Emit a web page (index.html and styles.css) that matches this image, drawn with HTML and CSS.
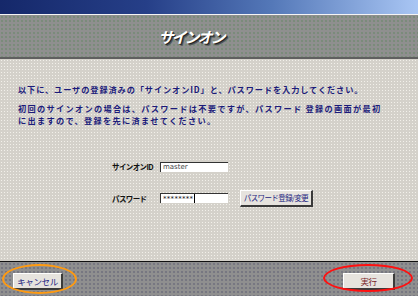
FILE: index.html
```html
<!DOCTYPE html>
<html lang="ja">
<head>
    <meta charset="UTF-8">
    <meta name="viewport" content="width=device-width, initial-scale=1.0">
    <title>サインオン</title>
    <link rel="stylesheet" href="styles.css">
</head>
<body>
<div class="page">
    <div class="topbar"></div>

    <header class="title-bar">
        <h1 class="title">サインオン</h1>
    </header>

    <div class="content">
        <p class="message tight">以下に、ユーザの登録済みの「サインオンID」と、パスワードを入力してください。</p>
        <p class="message">初回のサインオンの場合は、パスワードは不要ですが、パスワード 登録の画面が最初<br>に出ますので、登録を先に済ませてください。</p>

        <div class="signon-form">
            <label class="field-label">サインオンID</label>
            <div class="field-box">master</div>
            <div></div>

            <label class="field-label">パスワード</label>
            <div class="field-box password">********<span class="caret"></span></div>
            <button class="btn btn-small">パスワード登録/変更</button>
        </div>
    </div>

    <footer class="bottom-bar">
        <div class="btn-wrap cancel">
            <button class="btn btn-cancel">キャンセル</button>
        </div>
        <div class="btn-wrap execute">
            <button class="btn btn-execute">実行</button>
        </div>
    </footer>
</div>
</body>
</html>
```

FILE: styles.css
```css
body {
    margin: 0;
    padding: 0;
    font-family: "Noto Sans CJK JP", "Liberation Sans", sans-serif;
    background-color: #d4d1ca;
}

.page {
    width: 418px;
    height: 296px;
    overflow: hidden;
    display: flex;
    flex-direction: column;
}

.topbar {
    height: 14px;
    border-bottom: 1px solid #f4f4f4;
    background: linear-gradient(to right, #15286a 0%, #263f88 35%, #5478b8 65%, #a9c6f4 100%);
}

.title-bar {
    height: 42px;
    background-color: #8f8f8f;
    background-image: radial-gradient(circle, #6f8a6f 0.6px, transparent 0.9px);
    background-size: 4px 4px;
    border-bottom: 2px solid #5f5f5f;
    display: flex;
    align-items: center;
    justify-content: center;
    padding-right: 36px;
}

.title {
    margin: 0;
    font-size: 15px;
    font-weight: bold;
    font-style: italic;
    letter-spacing: -2px;
    color: #fff;
    text-shadow: 1px 1px 0 #222, 2px 2px 0 #555;
}

.content {
    flex: 1;
    padding: 24px 0 0 18px;
    background-color: #d4d1ca;
    background-image: radial-gradient(circle, #f2f0ea 0.6px, transparent 0.9px);
    background-size: 3px 3px;
}

.message {
    margin: 0 0 7px;
    font-size: 8.2px;
    line-height: 12px;
    font-weight: bold;
    letter-spacing: 1.3px;
    color: #1b1b7a;
    white-space: nowrap;
}

.tight {
    letter-spacing: 0.9px;
}

.signon-form {
    display: grid;
    grid-template-columns: 48px 69px auto;
    row-gap: 17.5px;
    align-items: center;
    margin: 35px 0 0 94px;
}

.field-label {
    font-size: 7.5px;
    font-weight: bold;
    letter-spacing: -0.6px;
    color: #111;
    white-space: nowrap;
}

.field-box {
    width: 68px;
    box-sizing: border-box;
    height: 10px;
    background: #fff;
    border-top: 1px solid #333;
    border-left: 1px solid #333;
    font-family: "DejaVu Sans", sans-serif;
    font-size: 7px;
    line-height: 8px;
    color: #444;
    padding-left: 2px;
    display: flex;
    align-items: center;
}

.password {
    letter-spacing: 0.3px;
    color: #111;
}

.caret {
    display: inline-block;
    width: 1px;
    height: 9px;
    background: #000;
    margin-left: 1px;
}

.btn {
    box-sizing: border-box;
    height: 17px;
    padding: 0;
    background-color: #e6e3de;
    border-top: 1px solid #fff;
    border-left: 1px solid #fff;
    border-right: 2px solid #3a3a3a;
    border-bottom: 2px solid #3a3a3a;
    font-family: "Noto Sans CJK JP", sans-serif;
    font-size: 8.5px;
    letter-spacing: -0.4px;
    color: #23237e;
    white-space: nowrap;
}

.btn-small {
    width: 73px;
    margin-left: 11px;
    font-size: 7.5px;
    letter-spacing: -0.6px;
}

.bottom-bar {
    height: 30px;
    border-top: 1px solid #111;
    background-color: #8f8f8f;
    background-image: radial-gradient(circle, #6a6a7a 0.6px, transparent 0.9px);
    background-size: 4px 4px;
    display: flex;
    justify-content: space-between;
    align-items: flex-start;
    padding: 4px 23px 0 13px;
}

.btn-wrap {
    position: relative;
}

.btn-wrap::after {
    content: "";
    position: absolute;
    border-radius: 50%;
    border: 2px solid;
}

.cancel::after {
    left: -11px;
    right: -14px;
    top: -2px;
    bottom: -4px;
    border-color: #ff9a10;
}

.execute::after {
    left: -20px;
    right: -18px;
    top: -2px;
    bottom: -2px;
    border-color: #ff1010;
}

.btn-cancel {
    width: 50px;
}

.btn-execute {
    width: 52px;
    color: #7a1f2a;
}
```
